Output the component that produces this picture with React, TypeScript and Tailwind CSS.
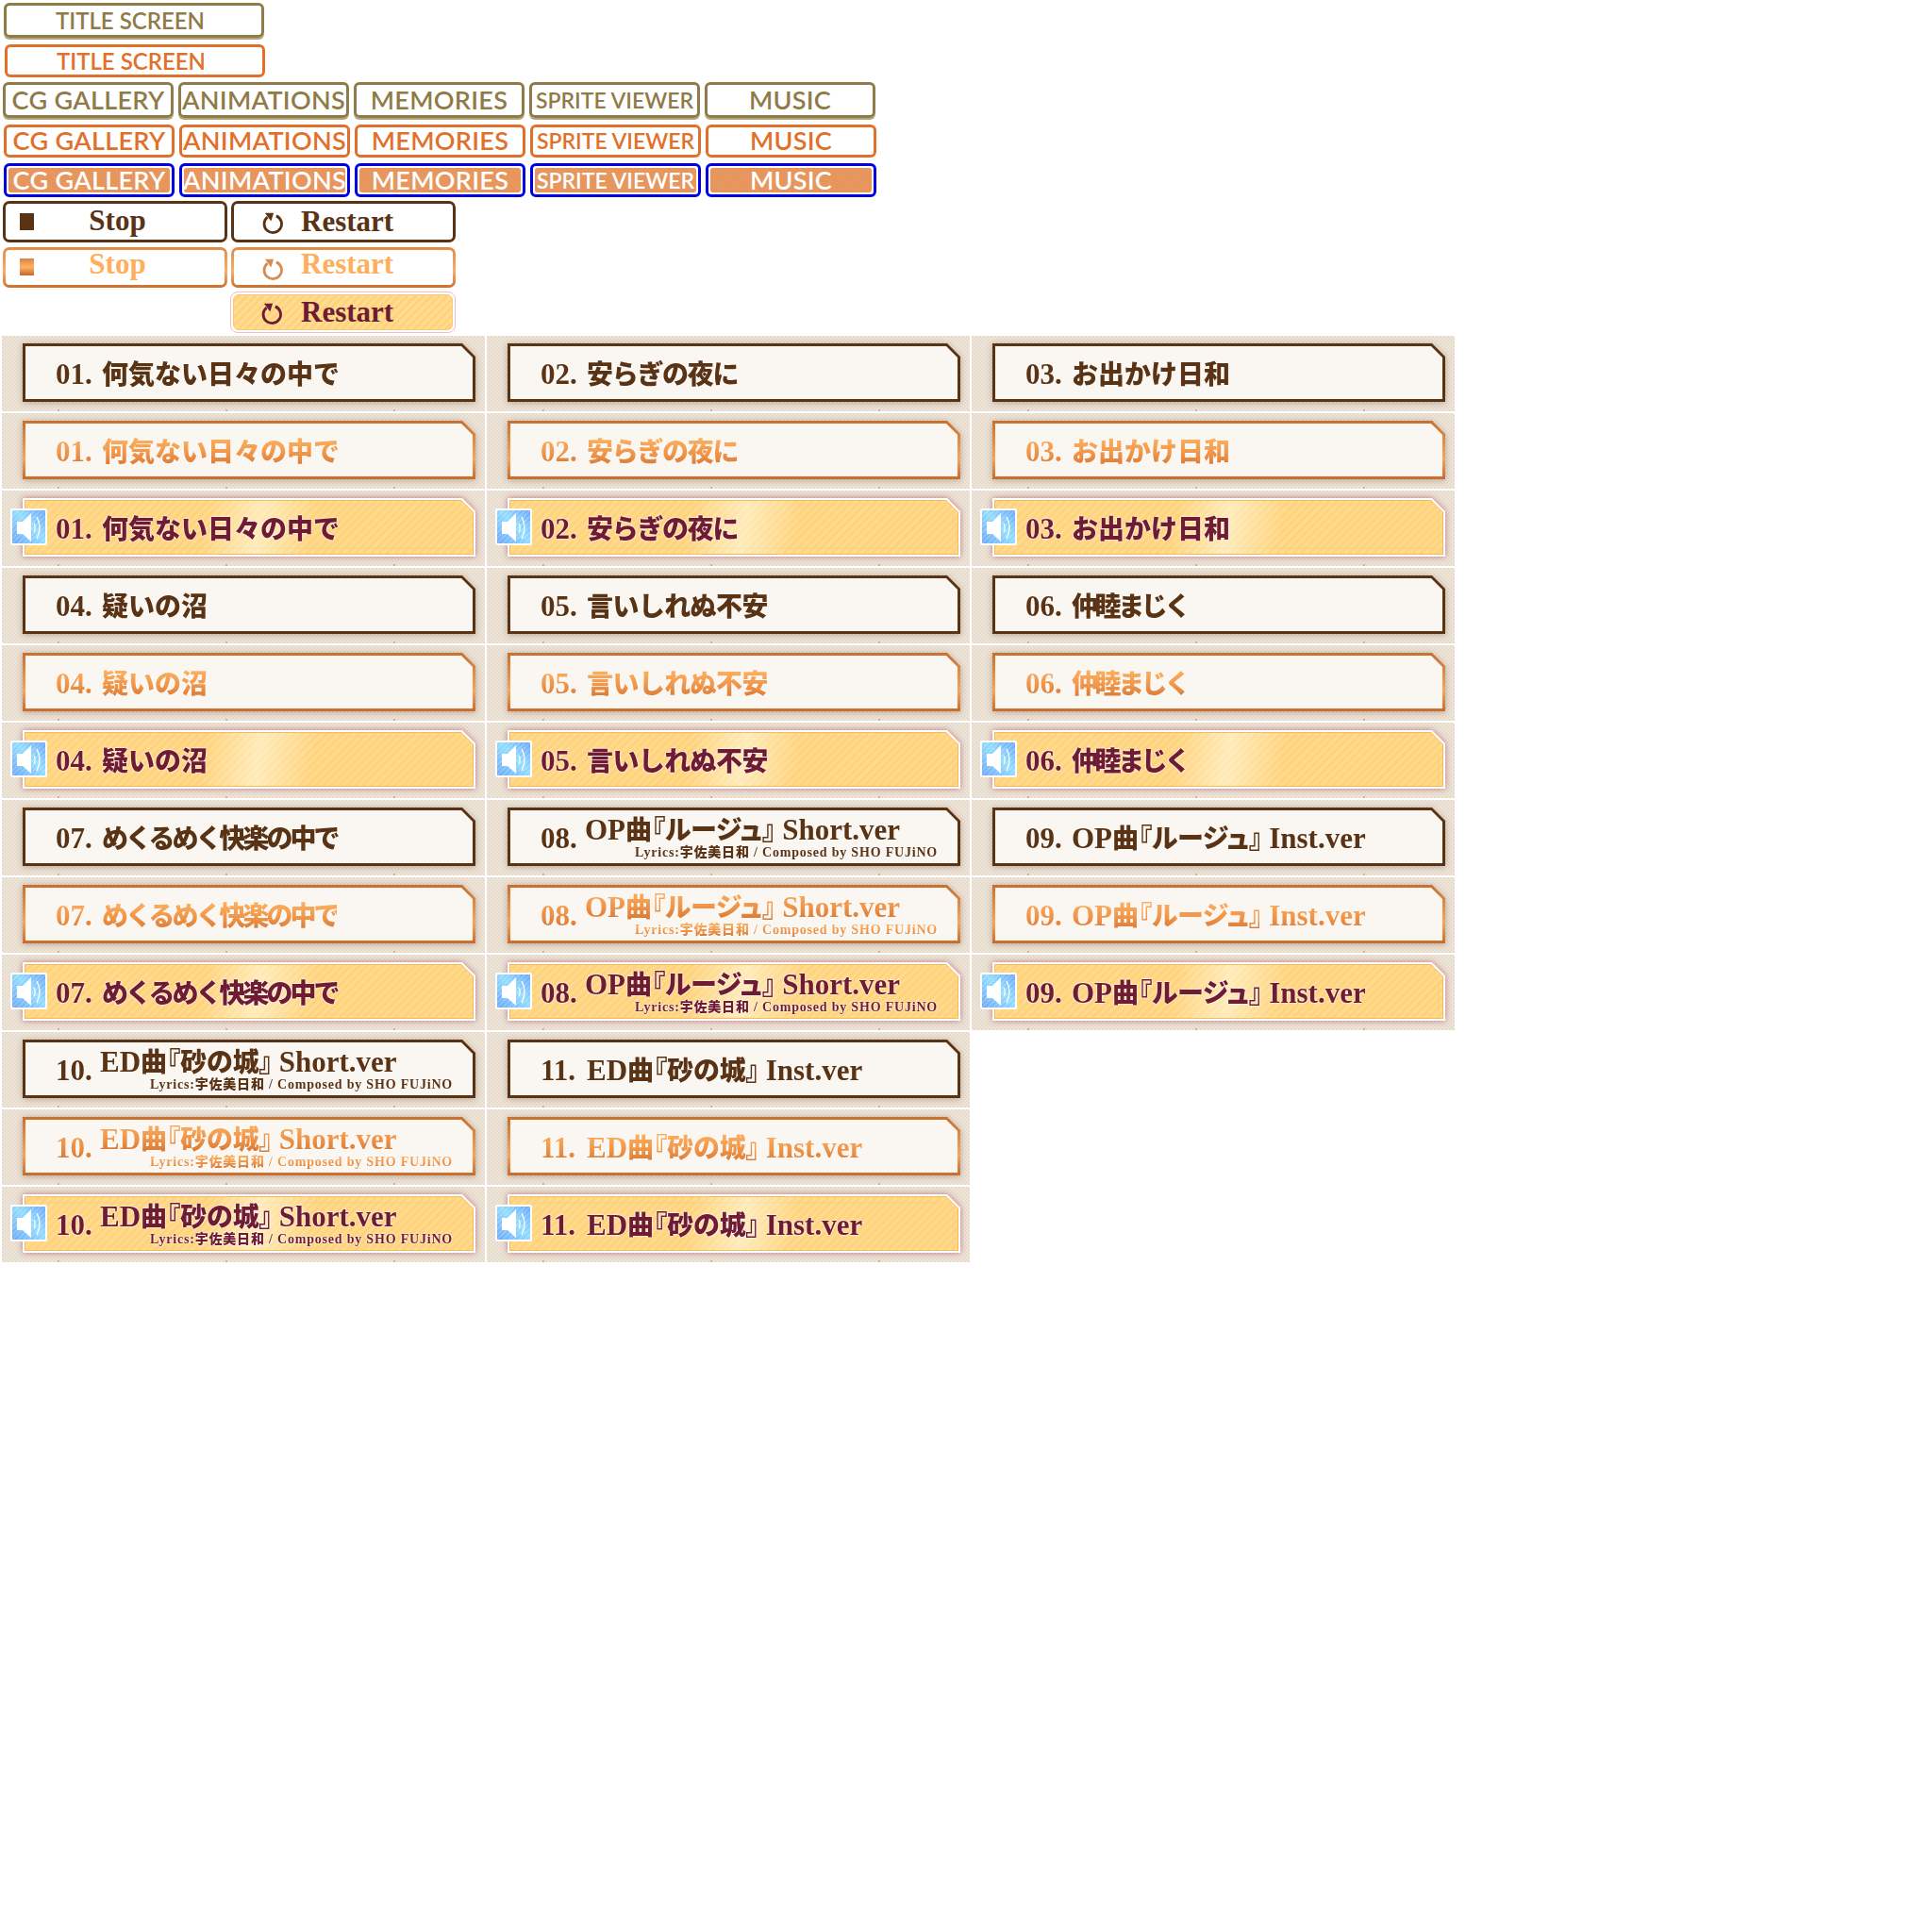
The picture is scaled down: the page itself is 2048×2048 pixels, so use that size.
import React from "react";

const nav = "[font-family:'Lato',sans-serif]";
const serif = "[font-family:'Liberation_Serif','Noto_Sans_CJK_JP',serif]";
const canvas =
  "bg-[radial-gradient(circle_at_60px_79px,rgba(205,135,85,.55)_0_1px,transparent_1.5px),repeating-conic-gradient(rgba(255,255,255,.3)_0_25%,transparent_0_50%),linear-gradient(#e6dacb,#e6dacb)] bg-[length:178px_80px,4px_4px,auto]";
const cut = "[clip-path:polygon(0_0,calc(100%_-_14px)_0,100%_14px,100%_100%,0_100%)]";
const cut13 = "[clip-path:polygon(0_0,calc(100%_-_13px)_0,100%_13px,100%_100%,0_100%)]";
const cut12 = "[clip-path:polygon(0_0,calc(100%_-_12px)_0,100%_12px,100%_100%,0_100%)]";
const gradText =
  "bg-[linear-gradient(#ffb565,#ee9347_55%,#d07030)] bg-clip-text text-transparent [filter:drop-shadow(0_0_1px_rgba(255,255,255,.8))]";
const gold =
  "bg-[linear-gradient(100deg,transparent_40%,rgba(255,250,225,.6)_52%,transparent_64%),repeating-linear-gradient(135deg,rgba(255,235,180,.3)_0_3px,transparent_3px_6px),linear-gradient(#ffd27c,#ffd27c)]";
const paper =
  "bg-[repeating-conic-gradient(rgba(235,225,215,.1)_0_25%,transparent_0_50%),linear-gradient(#fbf8f4,#fbf8f4)] bg-[length:4px_4px,auto]";

type S = 0 | 1 | 2;
const textCls: Record<S, string> = {
  0: "text-[#5a3214] [text-shadow:0_0_2px_#fff]",
  1: gradText,
  2: "text-[#6e1b33] [text-shadow:0_0_2px_#fff,0_0_2px_#fff]",
};

function Speaker() {
  return (
    <div className="absolute left-[9px] top-[19px] z-10 h-[39px] w-[39px] rounded-[2px] border-2 border-white bg-[repeating-linear-gradient(135deg,rgba(255,255,255,.18)_0_2px,transparent_2px_4px),linear-gradient(45deg,#6aa6fa,#8fdcff_55%,#6aa6fa)]">
      <svg viewBox="0 0 39 39" className="absolute -left-[2px] -top-[2px] h-[39px] w-[39px]">
        <path d="M7 14H13L22 5V35L13 27H7Z" fill="#fff" />
        <path d="M25 16Q27.5 20 25 25" fill="none" stroke="#fff" strokeWidth="1.2" />
        <path d="M28 9Q34 20 28 32" fill="none" stroke="#fff" strokeWidth="1.4" />
      </svg>
    </div>
  );
}

function Title({ text }: { text: string }) {
  const m = text.match(/^([A-Z]+)(.+? )([A-Za-z.]+)$/);
  if (!m) return <>{text}</>;
  return (
    <>
      <span className="text-[31px]">{m[1]}</span>
      <span className="[font-feature-settings:'palt']">{m[2]}</span>
      <span className="text-[31px]">{m[3]}</span>
    </>
  );
}

function Track({ n, title, sub, s, tight }: { n: string; title: string; sub?: string; s: S; tight?: string }) {
  const frame =
    s === 0
      ? "bg-[#5a3214] p-[3px]"
      : s === 1
        ? "bg-[linear-gradient(#c8702f,#f6a55c_65%,#c96a2a)] p-[3px]"
        : "bg-white p-[2px]";
  const shadow =
    s === 2
      ? "[filter:drop-shadow(0_0_3px_rgba(165,60,75,.65))]"
      : "[filter:drop-shadow(0_1px_3px_rgba(120,90,60,.45))]";
  const body = (
    <div className={`${cut12} h-full ${s === 2 ? gold : paper} ${sub ? "flex pl-[32px] pr-[21px]" : "flex items-baseline pl-[32px] pt-[12px]"}`}>
      {sub ? (
        <>
          <span className={`w-[47px] shrink-0 self-start pt-[12px] text-[31px] leading-[36px] whitespace-pre ${textCls[s]}`}>{n}.</span>
          <div className="flex flex-1 flex-col">
            <span className={`self-start pt-[5px] text-[28px] leading-[32px] whitespace-pre ${textCls[s]}`}><Title text={title} /></span>
            <span className={`-mt-[1px] self-end text-[14px] leading-[16px] tracking-[.8px] whitespace-pre ${textCls[s]}`}>{sub}</span>
          </div>
        </>
      ) : (
        <>
          <span className={`w-[49px] shrink-0 text-[31px] leading-[36px] whitespace-pre ${textCls[s]}`}>{n}.</span>
          <span className={`text-[28px] leading-[36px] whitespace-pre ${tight ?? ""} ${textCls[s]}`}><Title text={title} /></span>
        </>
      )}
    </div>
  );
  return (
    <div className={`relative h-[80px] w-[512px] pl-[22px] pr-[10px] pt-[8px] font-black ${canvas} ${serif}`}>
      {s === 2 && <Speaker />}
      <div className={shadow}>
        <div className={`${cut} h-[62px] w-[480px] ${frame}`}>
          {s === 2 ? <div className={`${cut13} h-full bg-[#f9b95e] p-[1px]`}>{body}</div> : body}
        </div>
      </div>
    </div>
  );
}

const L = "Lyrics:宇佐美日和 / Composed by SHO FUJiNO";
const rows: { n: string; title: string; sub?: string; tight?: string }[][] = [
  [{ n: "01", title: "何気ない日々の中で" }, { n: "02", title: "安らぎの夜に", tight: "tracking-[-1.3px]" }, { n: "03", title: "お出かけ日和" }],
  [{ n: "04", title: "疑いの沼" }, { n: "05", title: "言いしれぬ不安", tight: "tracking-[-.6px]" }, { n: "06", title: "仲睦まじく", tight: "tracking-[-3.4px]" }],
  [{ n: "07", title: "めくるめく快楽の中で", tight: "tracking-[-3px]" }, { n: "08", title: "OP曲『ルージュ』 Short.ver", sub: L }, { n: "09", title: "OP曲『ルージュ』 Inst.ver" }],
  [{ n: "10", title: "ED曲『砂の城』 Short.ver", sub: L }, { n: "11", title: "ED曲『砂の城』 Inst.ver" }],
];

const navStyles: Record<S, string> = {
  0: "h-[38px] rounded-[6px] border-[3px] border-[#8f7b47] text-[#8f7b47] shadow-[0_2px_0_#b3a67c]",
  1: "h-[35px] rounded-[6px] border-[3px] border-[#e0702a] text-[#e0702a]",
  2: "h-[36px] rounded-[6px] border-[3px] border-[#0000e0] p-[2px] text-white",
};

function NavBtn({ label, s, small }: { label: string; s: S; small?: boolean }) {
  return (
    <div className={`w-[181px] shrink-0 ${navStyles[s]} ${nav}`}>
      <div
        className={`flex h-full items-center justify-center whitespace-pre rounded-[3px] font-semibold ${small ? "text-[23px]" : "text-[27px] tracking-[.3px]"} ${s === 2 ? "bg-[repeating-linear-gradient(45deg,rgba(255,255,255,.06)_0_1px,transparent_1px_3px),linear-gradient(#e6945a,#e6945a)]" : ""}`}
      >
        {label}
      </div>
    </div>
  );
}

function NavRow({ s, cls }: { s: S; cls: string }) {
  return (
    <div className={`flex gap-[5px] ${cls}`}>
      <NavBtn label="CG GALLERY" s={s} />
      <NavBtn label="ANIMATIONS" s={s} />
      <NavBtn label="MEMORIES" s={s} />
      <NavBtn label="SPRITE VIEWER" s={s} small />
      <NavBtn label="MUSIC" s={s} />
    </div>
  );
}

function RestartIcon({ color }: { color: string }) {
  return (
    <svg viewBox="0 0 24 24" className="h-[26px] w-[26px]">
      <path d="M15.5 6.3A8.5 8.5 0 1 1 7 7.5" fill="none" stroke={color} strokeWidth="2.6" />
      <path d="M4.5 3.5L13 3.5L10.5 11.5Z" fill={color} />
    </svg>
  );
}

export default function App() {
  return (
    <div className="min-h-[2048px] bg-white">
      <div className={`ml-[4px] mt-[3px] flex h-[37px] w-[276px] items-center justify-center rounded-[6px] border-[3px] border-[#8f7b47] pr-[8px] text-[24px] font-semibold text-[#8f7b47] shadow-[0_2px_0_#b3a67c] ${nav}`}>
        TITLE SCREEN
      </div>
      <div className={`ml-[5px] mt-[7px] flex h-[35px] w-[276px] items-center justify-center rounded-[6px] border-[3px] border-[#e0702a] pr-[8px] text-[24px] font-semibold text-[#e0702a] ${nav}`}>
        TITLE SCREEN
      </div>
      <NavRow s={0} cls="ml-[3px] mt-[5px]" />
      <NavRow s={1} cls="ml-[4px] mt-[7px]" />
      <NavRow s={2} cls="ml-[4px] mt-[6px]" />

      <div className={`ml-[3px] mt-[4px] flex gap-[4px] text-[31px] font-bold ${serif}`}>
        <div className="relative flex h-[44px] w-[238px] items-center justify-center rounded-[7px] border-[3px] border-[#5a3214] pl-[5px] text-[#5a3214]">
          <span className="absolute left-[15px] top-[10px] h-[18px] w-[15px] bg-[#5a3214]" />
          <span className="-mt-[2px]">Stop</span>
        </div>
        <div className="flex h-[44px] w-[238px] items-center gap-[17px] rounded-[7px] border-[3px] border-[#5a3214] pl-[28px] text-[#5a3214]">
          <RestartIcon color="#5a3214" />
          <span>Restart</span>
        </div>
      </div>
      <div className={`ml-[3px] mt-[5px] flex gap-[4px] text-[31px] font-bold ${serif}`}>
        <div className="h-[43px] w-[238px] rounded-[7px] bg-[linear-gradient(#e08a48,#f8ae6a_60%,#d06c2c)] p-[3px]">
          <div className="relative flex h-full items-center justify-center rounded-[4px] bg-white pl-[5px] text-[#ffae5c]">
            <span className="absolute left-[15px] top-[9px] h-[18px] w-[15px] bg-[linear-gradient(#dc8240,#ffb162_50%,#c56a2c)]" />
            <span className="-mt-[6px]">Stop</span>
          </div>
        </div>
        <div className="h-[43px] w-[238px] rounded-[7px] bg-[linear-gradient(#e08a48,#f8ae6a_60%,#d06c2c)] p-[3px]">
          <div className="flex h-full items-center gap-[17px] rounded-[4px] bg-white pl-[28px] text-[#ffae5c]">
            <RestartIcon color="#d98c52" />
            <span className="-mt-[7px]">Restart</span>
          </div>
        </div>
      </div>
      <div className={`ml-[244px] mt-[4px] h-[44px] w-[239px] rounded-[8px] border border-[#f4bcc0] bg-white p-[2px] text-[31px] font-bold text-[#6e1b33] ${serif}`}>
        <div className="flex h-full items-center gap-[18px] rounded-[6px] border border-[#fbc877] bg-[repeating-linear-gradient(135deg,rgba(255,235,180,.4)_0_3px,transparent_3px_6px),linear-gradient(#ffd27c,#ffd27c)] pl-[27px]">
          <RestartIcon color="#6e1b33" />
          <span>Restart</span>
        </div>
      </div>

      <div className="ml-[2px] mt-[3px] grid w-[1540px] grid-cols-[repeat(3,512px)] gap-[2px]">
        {rows.map((row) =>
          ([0, 1, 2] as S[]).map((s) => (
            <React.Fragment key={`${row[0].n}-${s}`}>
              {row.map((t) => (
                <Track key={t.n} {...t} s={s} />
              ))}
              {row.length < 3 && <div />}
            </React.Fragment>
          )),
        )}
      </div>
    </div>
  );
}
